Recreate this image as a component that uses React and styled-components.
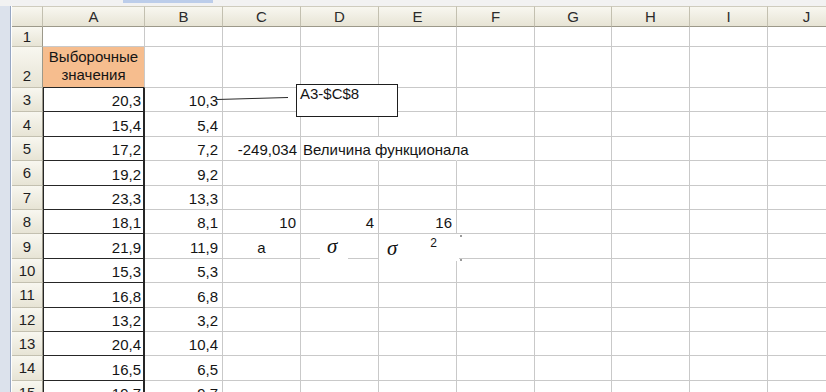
import React from 'react';
import styled, { createGlobalStyle } from 'styled-components';

const GlobalStyle = createGlobalStyle`
  html, body {
    margin: 0;
    padding: 0;
    background: #ffffff;
  }
  body {
    width: 826px;
    height: 392px;
    overflow: hidden;
    font-family: "Liberation Sans", Arial, sans-serif;
  }
`;

const COLUMNS = ['A', 'B', 'C', 'D', 'E', 'F', 'G', 'H', 'I', 'J'];
const WIDTHS = [102, 78, 78, 78, 78, 78, 77, 78, 78, 78];

const SAMPLE = ['20,3', '15,4', '17,2', '19,2', '23,3', '18,1', '21,9', '15,3', '16,8', '13,2', '20,4', '16,5', '19,7'];
const SHIFTED = ['10,3', '5,4', '7,2', '9,2', '13,3', '8,1', '11,9', '5,3', '6,8', '3,2', '10,4', '6,5', '9,7'];

const Window = styled.div`
  display: flex;
  flex-direction: column;
  width: 826px;
  height: 392px;
  overflow: hidden;
`;

const TopStrip = styled.div`
  height: 6px;
  flex-shrink: 0;
  background: #f2f2f2;
  display: flex;
`;

const TabGlow = styled.div`
  margin-left: 123px;
  width: 90px;
  height: 3px;
  background: #bccdea;
`;

const Body = styled.div`
  display: flex;
  flex: 1;
  min-height: 0;
`;

const LeftFrame = styled.div`
  width: 10px;
  flex-shrink: 0;
  background: #dce2ec;
  border-right: 1px solid #97a7c3;
  margin-right: 1px;
`;

const SheetArea = styled.div`
  position: relative;
  flex: 1;
  overflow: hidden;
`;

const Grid = styled.div`
  display: grid;
  grid-template-columns: 31px ${WIDTHS.map((w) => `${w}px`).join(' ')};
  grid-template-rows: 21px 20px 41px repeat(13, 24.4px);
`;

const headerBg = 'linear-gradient(#f8f7f0, #e7e4d5)';

const Corner = styled.div`
  background: ${headerBg};
  border-top: 1px solid #cfccbe;
  border-right: 1px solid #c3c0b0;
  border-bottom: 1px solid #9c998a;
`;

const ColHeader = styled.div`
  box-sizing: border-box;
  background: ${headerBg};
  border-top: 1px solid #cfccbe;
  border-right: 1px solid #c3c0b0;
  border-bottom: 1px solid #9c998a;
  display: flex;
  align-items: center;
  justify-content: center;
  font-size: 15px;
  color: #2b2b2b;
`;

const RowHeader = styled.div`
  box-sizing: border-box;
  background: ${headerBg};
  border-right: 1px solid #9c998a;
  border-bottom: 1px solid #c3c0b0;
  display: flex;
  align-items: ${(p) => (p.$bottom ? 'flex-end' : 'center')};
  justify-content: center;
  padding-bottom: ${(p) => (p.$bottom ? '3px' : '0')};
  font-size: 15px;
  color: #1f1f1f;
`;

const Cell = styled.div`
  box-sizing: border-box;
  min-width: 0;
  display: flex;
  align-items: flex-end;
  justify-content: ${(p) => p.$align || 'flex-end'};
  padding: 0 ${(p) => p.$pr ?? 4}px 2px ${(p) => p.$pl ?? 2}px;
  border-right: 1px solid ${(p) => (p.$noRight ? 'transparent' : '#c9c9c9')};
  border-bottom: 1px solid #c9c9c9;
  font-size: 15px;
  line-height: 17px;
  color: #141414;
  white-space: nowrap;
`;

const BoxedCell = styled(Cell)`
  border-left: 1px solid #262626;
  border-right: 2px solid #262626;
  border-bottom: 1px solid #262626;
`;

const TitleCell = styled(Cell)`
  background: #f6bd8e;
  justify-content: center;
  text-align: center;
  white-space: normal;
  line-height: 18px;
  padding: 0 1px 3px;
  border-bottom: 1px solid #262626;
`;

const TextBox = styled.div`
  position: absolute;
  left: 284px;
  top: 78px;
  width: 102px;
  height: 33px;
  box-sizing: border-box;
  border: 1px solid #1e1e1e;
  background: #ffffff;
  padding: 0 3px;
  font-size: 15px;
  line-height: 17px;
  color: #141414;
`;

const Connector = styled.svg`
  position: absolute;
  left: 205px;
  top: 88px;
  overflow: visible;
`;

const Equation = styled.div`
  position: absolute;
  left: ${(p) => p.$x}px;
  top: ${(p) => p.$y}px;
  width: ${(p) => p.$w}px;
  height: ${(p) => p.$h}px;
  background: #ffffff;
  display: flex;
  align-items: flex-start;
  padding-left: ${(p) => p.$pad}px;
  box-sizing: border-box;
`;

const Sigma = styled.span`
  font-family: "Liberation Serif", "Times New Roman", serif;
  font-style: italic;
  font-size: 21px;
  line-height: 20px;
  margin-top: ${(p) => p.$top}px;
  color: #141414;
`;

const Sup = styled.span`
  font-size: 12px;
  line-height: 12px;
  margin-top: 3px;
  margin-left: 33px;
  color: #141414;
`;

const Handle = styled.span`
  position: absolute;
  left: 81px;
  top: ${(p) => p.$y}px;
  width: 2px;
  height: 2px;
  background: #9a9a9a;
`;

function cellFor(row, col) {
  if (row === 2 && col === 'A') return <TitleCell key={col}>Выборочные значения</TitleCell>;
  if (row >= 3 && col === 'A') return <BoxedCell key={col} $pr={2}>{SAMPLE[row - 3]}</BoxedCell>;
  if (row >= 3 && col === 'B') return <Cell key={col}>{SHIFTED[row - 3]}</Cell>;
  if (row === 5 && col === 'C') return <Cell key={col} $pr={3}>-249,034</Cell>;
  if (row === 5 && col === 'D')
    return <Cell key={col} $align="flex-start" $noRight>Величина функционала</Cell>;
  if (row === 5 && col === 'E') return <Cell key={col} $noRight />;
  if (row === 8 && col === 'C') return <Cell key={col}>10</Cell>;
  if (row === 8 && col === 'D') return <Cell key={col}>4</Cell>;
  if (row === 8 && col === 'E') return <Cell key={col}>16</Cell>;
  if (row === 9 && col === 'C') return <Cell key={col} $align="center" $pl={0} $pr={0}>a</Cell>;
  return <Cell key={col} />;
}

export default function App() {
  const rows = Array.from({ length: 15 }, (_, i) => i + 1);
  return (
    <>
      <GlobalStyle />
      <Window>
        <TopStrip>
          <TabGlow />
        </TopStrip>
        <Body>
          <LeftFrame />
          <SheetArea>
            <Grid>
              <Corner />
              {COLUMNS.map((c) => (
                <ColHeader key={c}>{c}</ColHeader>
              ))}
              {rows.map((r) => (
                <React.Fragment key={r}>
                  <RowHeader $bottom={r === 2}>{r}</RowHeader>
                  {COLUMNS.map((c) => cellFor(r, c))}
                </React.Fragment>
              ))}
            </Grid>

            <Connector width="72" height="8">
              <line x1="0" y1="5.5" x2="71" y2="3.5" stroke="#2a2a2a" strokeWidth="1" />
            </Connector>
            <TextBox>A3-$C$8</TextBox>

            <Equation $x={308} $y={231} $w={28} $h={24} $pad={7}>
              <Sigma $top={-1}>σ</Sigma>
            </Equation>
            <Equation $x={367} $y={228} $w={80} $h={27} $pad={8}>
              <Sigma $top={4}>σ</Sigma>
              <Sup>2</Sup>
              <Handle $y={1} />
              <Handle $y={25} />
            </Equation>
          </SheetArea>
        </Body>
      </Window>
    </>
  );
}
